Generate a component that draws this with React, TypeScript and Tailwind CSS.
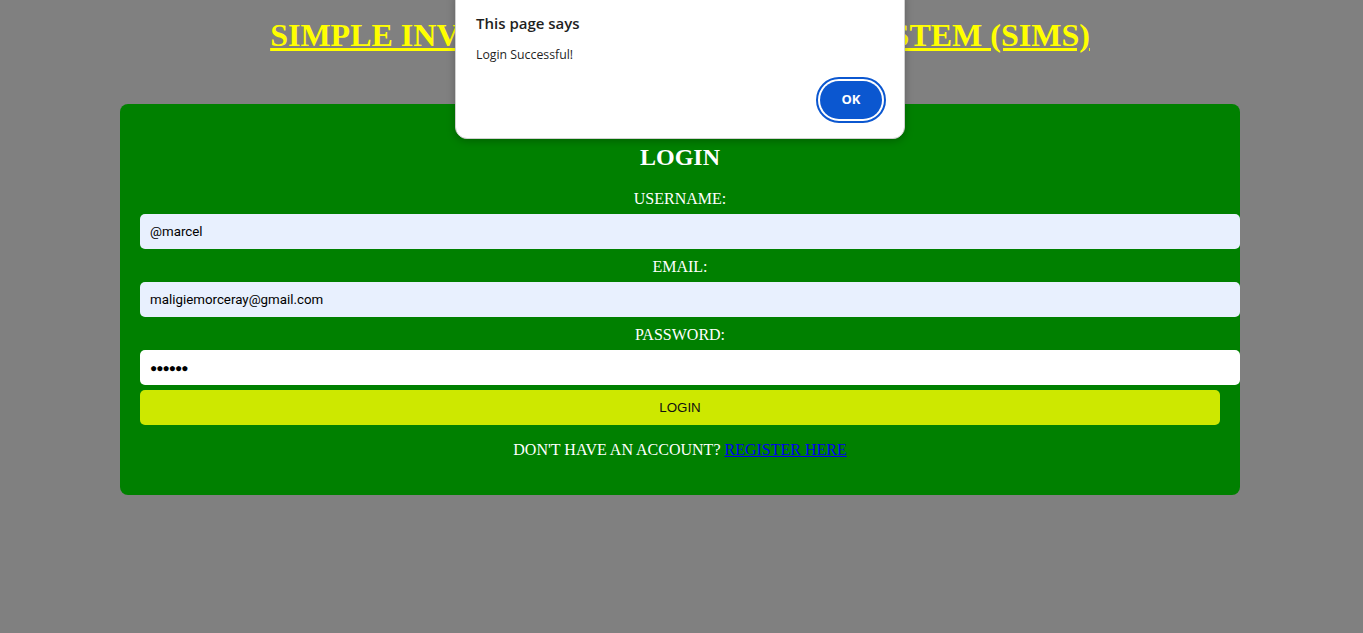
import React from "react";

const inputFont = { fontFamily: 'Roboto, Arial, sans-serif' };

function Field({ label, value, bg, password }: { label: string; value: string; bg: string; password?: boolean }) {
  return (
    <div className="flex flex-col gap-[5px]">
      <label className="block text-center text-[16px] leading-[20px]">{label}</label>
      <div
        className={`flex h-[35px] w-[calc(100%+20px)] items-center rounded-[5px] px-[10px] text-[13.33px] text-black ${bg}`}
        style={inputFont}
      >
        {password ? <span className="text-[12px] tracking-[-1px]">{value}</span> : value}
      </div>
    </div>
  );
}

export default function App() {
  const serif = { fontFamily: '"Liberation Serif", "Times New Roman", serif' };
  return (
    <div className="relative flex min-h-[633px] w-full flex-col bg-[#808080]" style={serif}>
      <h1 className="w-[1360px] pt-[17px] text-center text-[32px] font-bold leading-[37px] text-[#ffff00] underline">
        SIMPLE INVENTORY MANAGEMENT SYSTEM (SIMS)
      </h1>
      <div className="ml-[120px] mt-[50px] flex w-[1120px] flex-col rounded-[8px] bg-[#008000] p-[20px] text-white">
        <h2 className="mt-[19px] mb-[18px] text-center text-[24px] font-bold leading-[28px]">LOGIN</h2>
        <div className="flex flex-col gap-[8px]">
          <Field label="USERNAME:" value="@marcel" bg="bg-[#e8f0fe]" />
          <Field label="EMAIL:" value="maligiemorceray@gmail.com" bg="bg-[#e8f0fe]" />
          <Field label="PASSWORD:" value="●●●●●●" bg="bg-white" password />
        </div>
        <div
          className="mt-[5px] flex h-[35px] w-full items-center justify-center rounded-[5px] bg-[#cde800] text-[13.33px] text-[#111]"
          style={{ fontFamily: '"Liberation Sans", Arial, sans-serif' }}
        >
          LOGIN
        </div>
        <p className="my-[16px] text-center text-[16px] leading-[18px]">
          DON'T HAVE AN ACCOUNT? <a className="text-[#0000ee] underline">REGISTER HERE</a>
        </p>
      </div>

      <div
        className="absolute left-[455px] top-[-12px] flex h-[151px] w-[450px] flex-col rounded-[12px] border border-[#d0d0d0] bg-white px-[20px] pt-[23px] shadow-[0_2px_8px_rgba(0,0,0,0.25)]"
        style={{ fontFamily: '"Open Sans", "Noto Sans", sans-serif' }}
      >
        <div className="text-[15px] font-semibold leading-[22px] text-[#1f1f1f]">This page says</div>
        <div className="mt-[12px] text-[12.3px] leading-[18px] text-[#1f1f1f]">Login Successful!</div>
        <div className="mt-[13px] flex justify-end">
          <div className="-mr-[2px] flex h-[46px] w-[70px] items-center justify-center rounded-full border-[2px] border-[#0b57d0] bg-white">
            <div className="flex h-[38px] w-[62px] items-center justify-center rounded-full bg-[#0b57d0] text-[13px] font-bold text-white">
              OK
            </div>
          </div>
        </div>
      </div>
    </div>
  );
}
